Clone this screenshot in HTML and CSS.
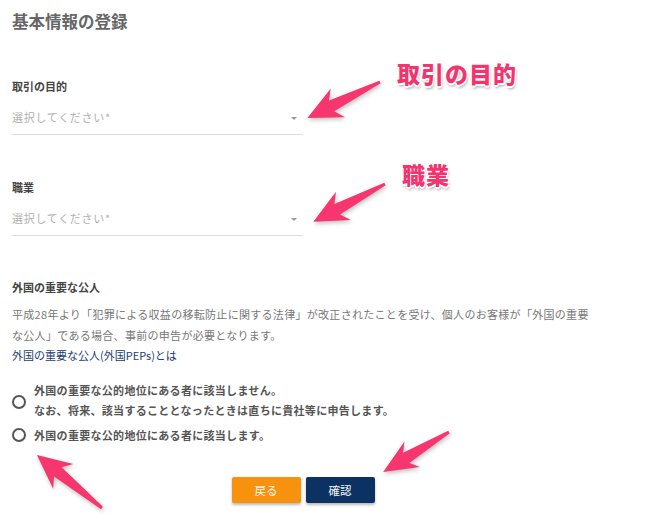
FILE: index.html
```html
<!DOCTYPE html>
<html lang="ja">
<head>
<meta charset="utf-8">
<title>基本情報の登録</title>
<link rel="stylesheet" href="styles.css">
</head>
<body>
<div class="page">
  <h1 class="title">基本情報の登録</h1>

  <div class="field first">
    <div class="label">取引の目的</div>
    <div class="select">
      <span class="placeholder">選択してください*</span>
      <span class="caret"></span>
    </div>
  </div>

  <div class="field">
    <div class="label">職業</div>
    <div class="select">
      <span class="placeholder">選択してください*</span>
      <span class="caret"></span>
    </div>
  </div>

  <div class="section">
    <div class="label">外国の重要な公人</div>
    <p class="desc">平成28年より「犯罪による収益の移転防止に関する法律」が改正されたことを受け、個人のお客様が「外国の重要な公人」である場合、事前の申告が必要となります。</p>
    <a class="link" href="#">外国の重要な公人(外国PEPs)とは</a>
  </div>

  <div class="radios">
    <label class="radio">
      <span class="circle"></span>
      <span class="rtext">外国の重要な公的地位にある者に該当しません。<br>なお、将来、該当することとなったときは直ちに貴社等に申告します。</span>
    </label>
    <label class="radio second">
      <span class="circle"></span>
      <span class="rtext">外国の重要な公的地位にある者に該当します。</span>
    </label>
  </div>

  <div class="buttons">
    <button class="btn back">戻る</button>
    <button class="btn confirm">確認</button>
  </div>
</div>

<span class="note note1">取引の目的</span>
<span class="note note2">職業</span>

<svg class="arrows" width="648" height="526" viewBox="0 0 648 526">
  <g fill="#f7356f">
    <polygon transform="translate(380 82) rotate(153.7)" points="0,-1.5 54,-6 47,-16 81,0 47,16 54,6 0,1.5"/>
    <polygon transform="translate(385 184) rotate(152.2)" points="0,-1.5 54,-6 47,-16 81,0 47,16 54,6 0,1.5"/>
    <polygon transform="translate(102 508) rotate(219.2)" points="0,-1.5 57,-6 50,-16 84,0 50,16 57,6 0,1.5"/>
    <polygon transform="translate(449 432) rotate(148.8)" points="0,-1.5 50,-6 43,-15 77,0 43,15 50,6 0,1.5"/>
  </g>
</svg>
</body>
</html>
```
FILE: styles.css
```css
html, body {
  margin: 0;
  padding: 0;
  background: #ffffff;
}
body {
  position: relative;
  width: 648px;
  height: 526px;
  overflow: hidden;
  font-family: "Noto Sans CJK JP", "Noto Sans", sans-serif;
  color: #555;
}
.page {
  width: 582px;
  padding: 9px 0 0 12px;
}
.title {
  margin: 0;
  font-size: 16.5px;
  line-height: 24px;
  font-weight: 700;
  color: #666;
}
.field {
  width: 291px;
  margin-top: 44px;
}
.field.first {
  margin-top: 45px;
}
.label {
  font-size: 11px;
  line-height: 16px;
  font-weight: 700;
  color: #444;
}
.select {
  display: flex;
  align-items: center;
  margin-top: 15px;
  padding-bottom: 9px;
  border-bottom: 1px solid #dcdcdc;
}
.placeholder {
  flex: 1;
  font-size: 11px;
  line-height: 16px;
  color: #b0b0b0;
  letter-spacing: 0.7px;
}
.caret {
  width: 0;
  height: 0;
  margin-right: 6px;
  margin-top: 3px;
  border-left: 3.5px solid transparent;
  border-right: 3.5px solid transparent;
  border-top: 3.5px solid #999;
}
.section {
  margin-top: 43px;
}
.desc {
  width: 580px;
  margin: 9px 0 0;
  font-size: 11px;
  line-height: 21px;
  letter-spacing: 0.3px;
  color: #777;
}
.link {
  display: block;
  font-size: 11px;
  line-height: 18px;
  color: #1a3d6d;
  text-decoration: none;
}
.radios {
  margin-top: 16px;
}
.radio {
  display: flex;
  align-items: center;
  gap: 8px;
}
.radio.second {
  margin-top: 5px;
}
.circle {
  flex: none;
  box-sizing: border-box;
  width: 14px;
  height: 14px;
  margin-top: 3px;
  border: 2px solid #555;
  border-radius: 50%;
}
.radio.second .circle {
  margin-top: 0;
}
.rtext {
  font-size: 11px;
  line-height: 20px;
  font-weight: 700;
  letter-spacing: 0.3px;
  color: #555;
}
.buttons {
  display: flex;
  justify-content: center;
  gap: 5px;
  margin-top: 32px;
}
.btn {
  width: 69px;
  height: 26px;
  border: none;
  border-radius: 2px;
  font-family: "Noto Sans CJK JP", "Noto Sans", sans-serif;
  font-size: 11.5px;
  color: #f4f4f4;
  box-shadow: 0 2px 3px rgba(0, 0, 0, 0.28);
  padding: 0;
}
.back {
  background: #f7920f;
}
.confirm {
  background: #0b3262;
}
.note {
  position: absolute;
  font-size: 23px;
  line-height: 26px;
  font-weight: 900;
  color: #f2356f;
  letter-spacing: 1px;
  text-shadow:
    -1px -1px 0 #fff, 1px -1px 0 #fff, -1px 1px 0 #fff, 1px 1px 0 #fff,
    0 2px 0 #fff, 1px 3px 3px rgba(0, 0, 0, 0.35);
}
.note1 {
  left: 397px;
  top: 60px;
}
.note2 {
  left: 402px;
  top: 161px;
}
.arrows {
  position: absolute;
  left: 0;
  top: 0;
  pointer-events: none;
  filter: drop-shadow(1px 2px 2px rgba(0, 0, 0, 0.25));
}
```
